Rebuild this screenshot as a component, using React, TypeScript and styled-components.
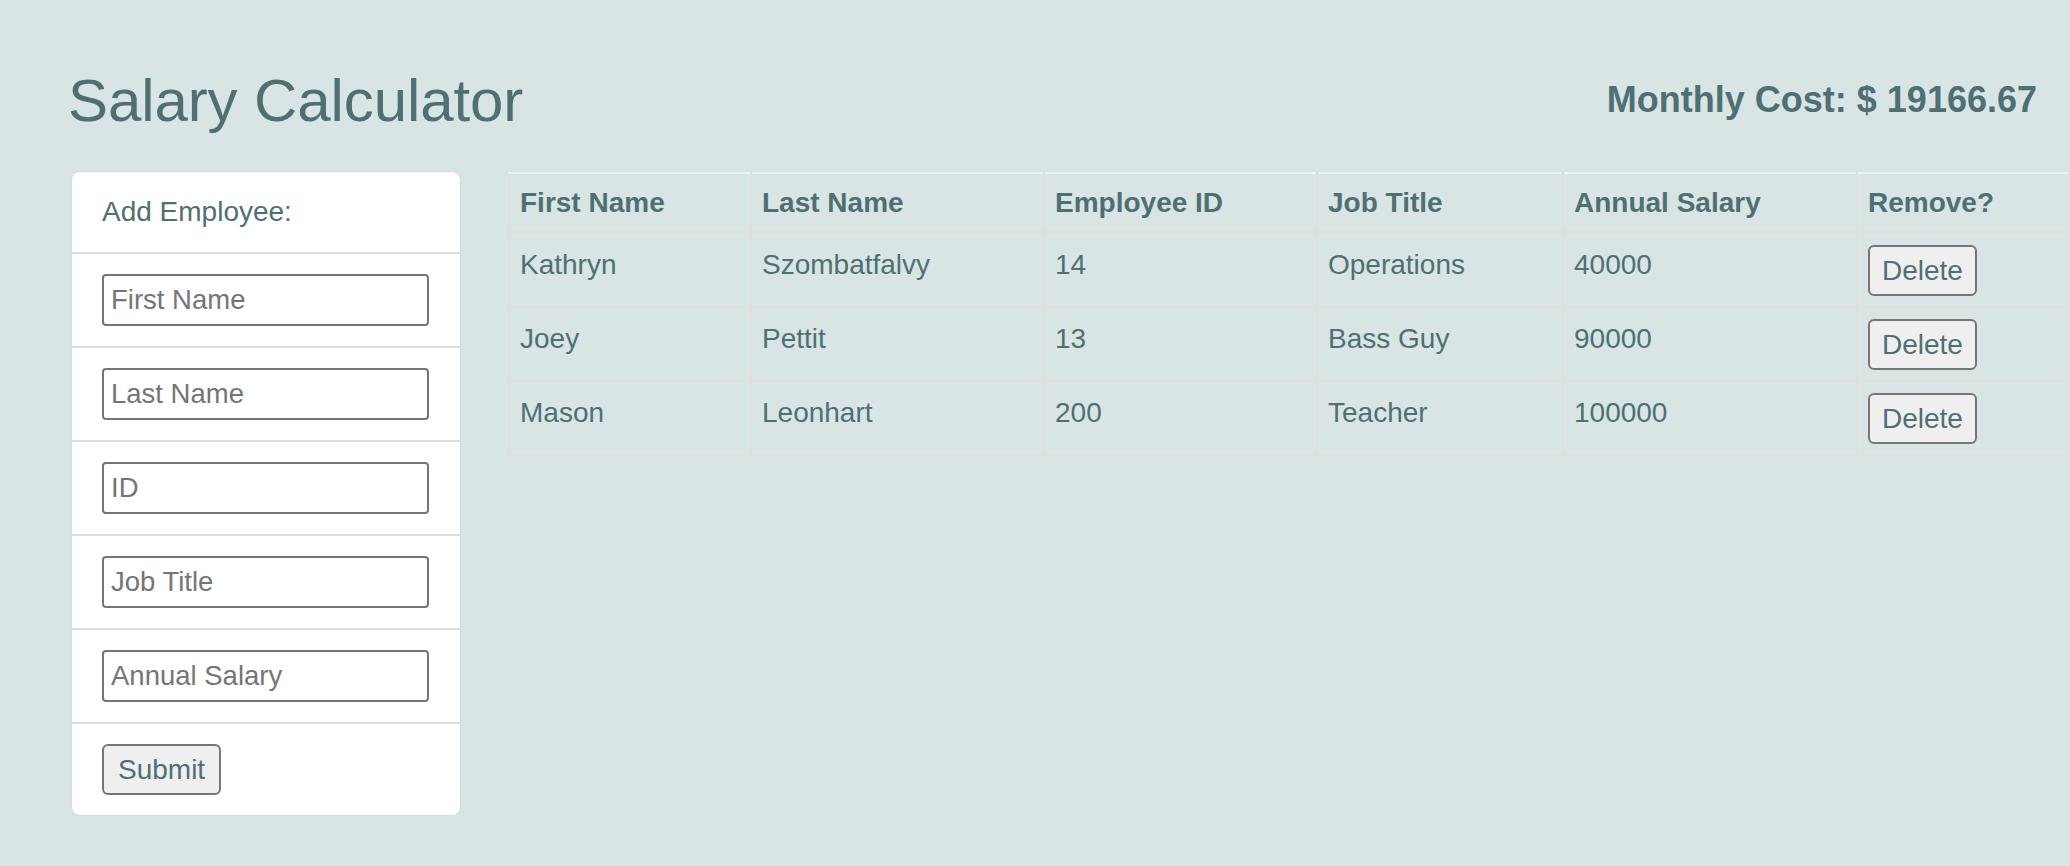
import React from 'react';
import styled, { createGlobalStyle } from 'styled-components';

type Employee = {
  firstName: string;
  lastName: string;
  id: string;
  title: string;
  salary: number;
};

const employees: Employee[] = [
  { firstName: 'Kathryn', lastName: 'Szombatfalvy', id: '14', title: 'Operations', salary: 40000 },
  { firstName: 'Joey', lastName: 'Pettit', id: '13', title: 'Bass Guy', salary: 90000 },
  { firstName: 'Mason', lastName: 'Leonhart', id: '200', title: 'Teacher', salary: 100000 },
];

const fields = ['First Name', 'Last Name', 'ID', 'Job Title', 'Annual Salary'];
const columns = ['First Name', 'Last Name', 'Employee ID', 'Job Title', 'Annual Salary', 'Remove?'];
const colWidths = [242, 293, 273, 246, 294, 212];

const GlobalStyle = createGlobalStyle`
  html, body {
    margin: 0;
    padding: 0;
    background: #d9e5e5;
  }
  body {
    font-family: "Liberation Sans", Arial, sans-serif;
    color: #4f7072;
    min-height: 866px;
  }
`;

const Page = styled.div`
  min-height: 866px;
  background: #d9e5e5;
`;

const Header = styled.header`
  display: flex;
  justify-content: space-between;
  align-items: flex-start;
  height: 172px;
  padding: 0 33px 0 68px;
  box-sizing: border-box;
`;

const Title = styled.h1`
  margin: 68px 0 0;
  font-size: 60px;
  line-height: 66px;
  font-weight: 400;
  letter-spacing: -0.1px;
`;

const Total = styled.h3`
  margin: 80px 0 0;
  font-size: 36px;
  line-height: 40px;
  font-weight: 700;
`;

const Main = styled.main`
  display: flex;
  align-items: flex-start;
  gap: 48px;
  padding-left: 72px;
`;

const Card = styled.form`
  width: 388px;
  flex: none;
  background: #fff;
  border-radius: 8px;
  box-shadow: 0 0 0 1px #d2dcdc;
  overflow: hidden;
`;

const CardItem = styled.div`
  padding: 20px 30px;
  font-size: 28px;
  line-height: 40px;
  & + & {
    border-top: 2px solid #dedede;
  }
`;

const Field = styled.input`
  display: block;
  width: 327px;
  height: 52px;
  box-sizing: border-box;
  border: 2px solid #767676;
  border-radius: 4px;
  padding: 0 7px;
  font-family: "Liberation Sans", Arial, sans-serif;
  font-size: 27.5px;
  color: #333;
  background: #fff;
  &::placeholder {
    color: #757575;
  }
`;

const Button = styled.button`
  height: 51px;
  box-sizing: border-box;
  padding: 0 ${p => (p.type === 'submit' ? 14 : 12)}px;
  border: 2px solid #767676;
  border-radius: 6px;
  background: #efefef;
  color: #4f7072;
  font-family: "Liberation Sans", Arial, sans-serif;
  font-size: 28px;
  line-height: 1;
  cursor: pointer;
`;

const DeleteButton = styled(Button)`
  vertical-align: top;
  margin: 0 0 3px;
`;

const Table = styled.table`
  width: 1560px;
  table-layout: fixed;
  border-collapse: collapse;
  font-size: 28px;
  line-height: 40px;
`;

const HeadCell = styled.th`
  text-align: left;
  font-weight: 700;
  padding: 9px 10px 7px;
  border: 2px solid #dfdfdf;
  border-top: 2px solid #eef4f4;
  border-bottom: 4px solid #dfdfdf;
  vertical-align: bottom;
`;

const Cell = styled.td`
  padding: 11px 10px 7px;
  border: 2px solid #dfdfdf;
  vertical-align: top;
  white-space: nowrap;
`;

export default function App() {
  const monthly = employees.reduce((sum, e) => sum + e.salary, 0) / 12;
  return (
    <Page>
      <GlobalStyle />
      <Header>
        <Title>Salary Calculator</Title>
        <Total>Monthly Cost: $ {monthly.toFixed(2)}</Total>
      </Header>
      <Main>
        <Card onSubmit={e => e.preventDefault()}>
          <CardItem>Add Employee:</CardItem>
          {fields.map(f => (
            <CardItem key={f}>
              <Field placeholder={f} />
            </CardItem>
          ))}
          <CardItem>
            <Button type="submit">Submit</Button>
          </CardItem>
        </Card>
        <Table>
          <colgroup>
            {colWidths.map((w, i) => (
              <col key={i} style={{ width: w }} />
            ))}
          </colgroup>
          <thead>
            <tr>
              {columns.map(c => (
                <HeadCell key={c}>{c}</HeadCell>
              ))}
            </tr>
          </thead>
          <tbody>
            {employees.map(e => (
              <tr key={e.id}>
                <Cell>{e.firstName}</Cell>
                <Cell>{e.lastName}</Cell>
                <Cell>{e.id}</Cell>
                <Cell>{e.title}</Cell>
                <Cell>{e.salary}</Cell>
                <Cell>
                  <DeleteButton type="button">Delete</DeleteButton>
                </Cell>
              </tr>
            ))}
          </tbody>
        </Table>
      </Main>
    </Page>
  );
}
